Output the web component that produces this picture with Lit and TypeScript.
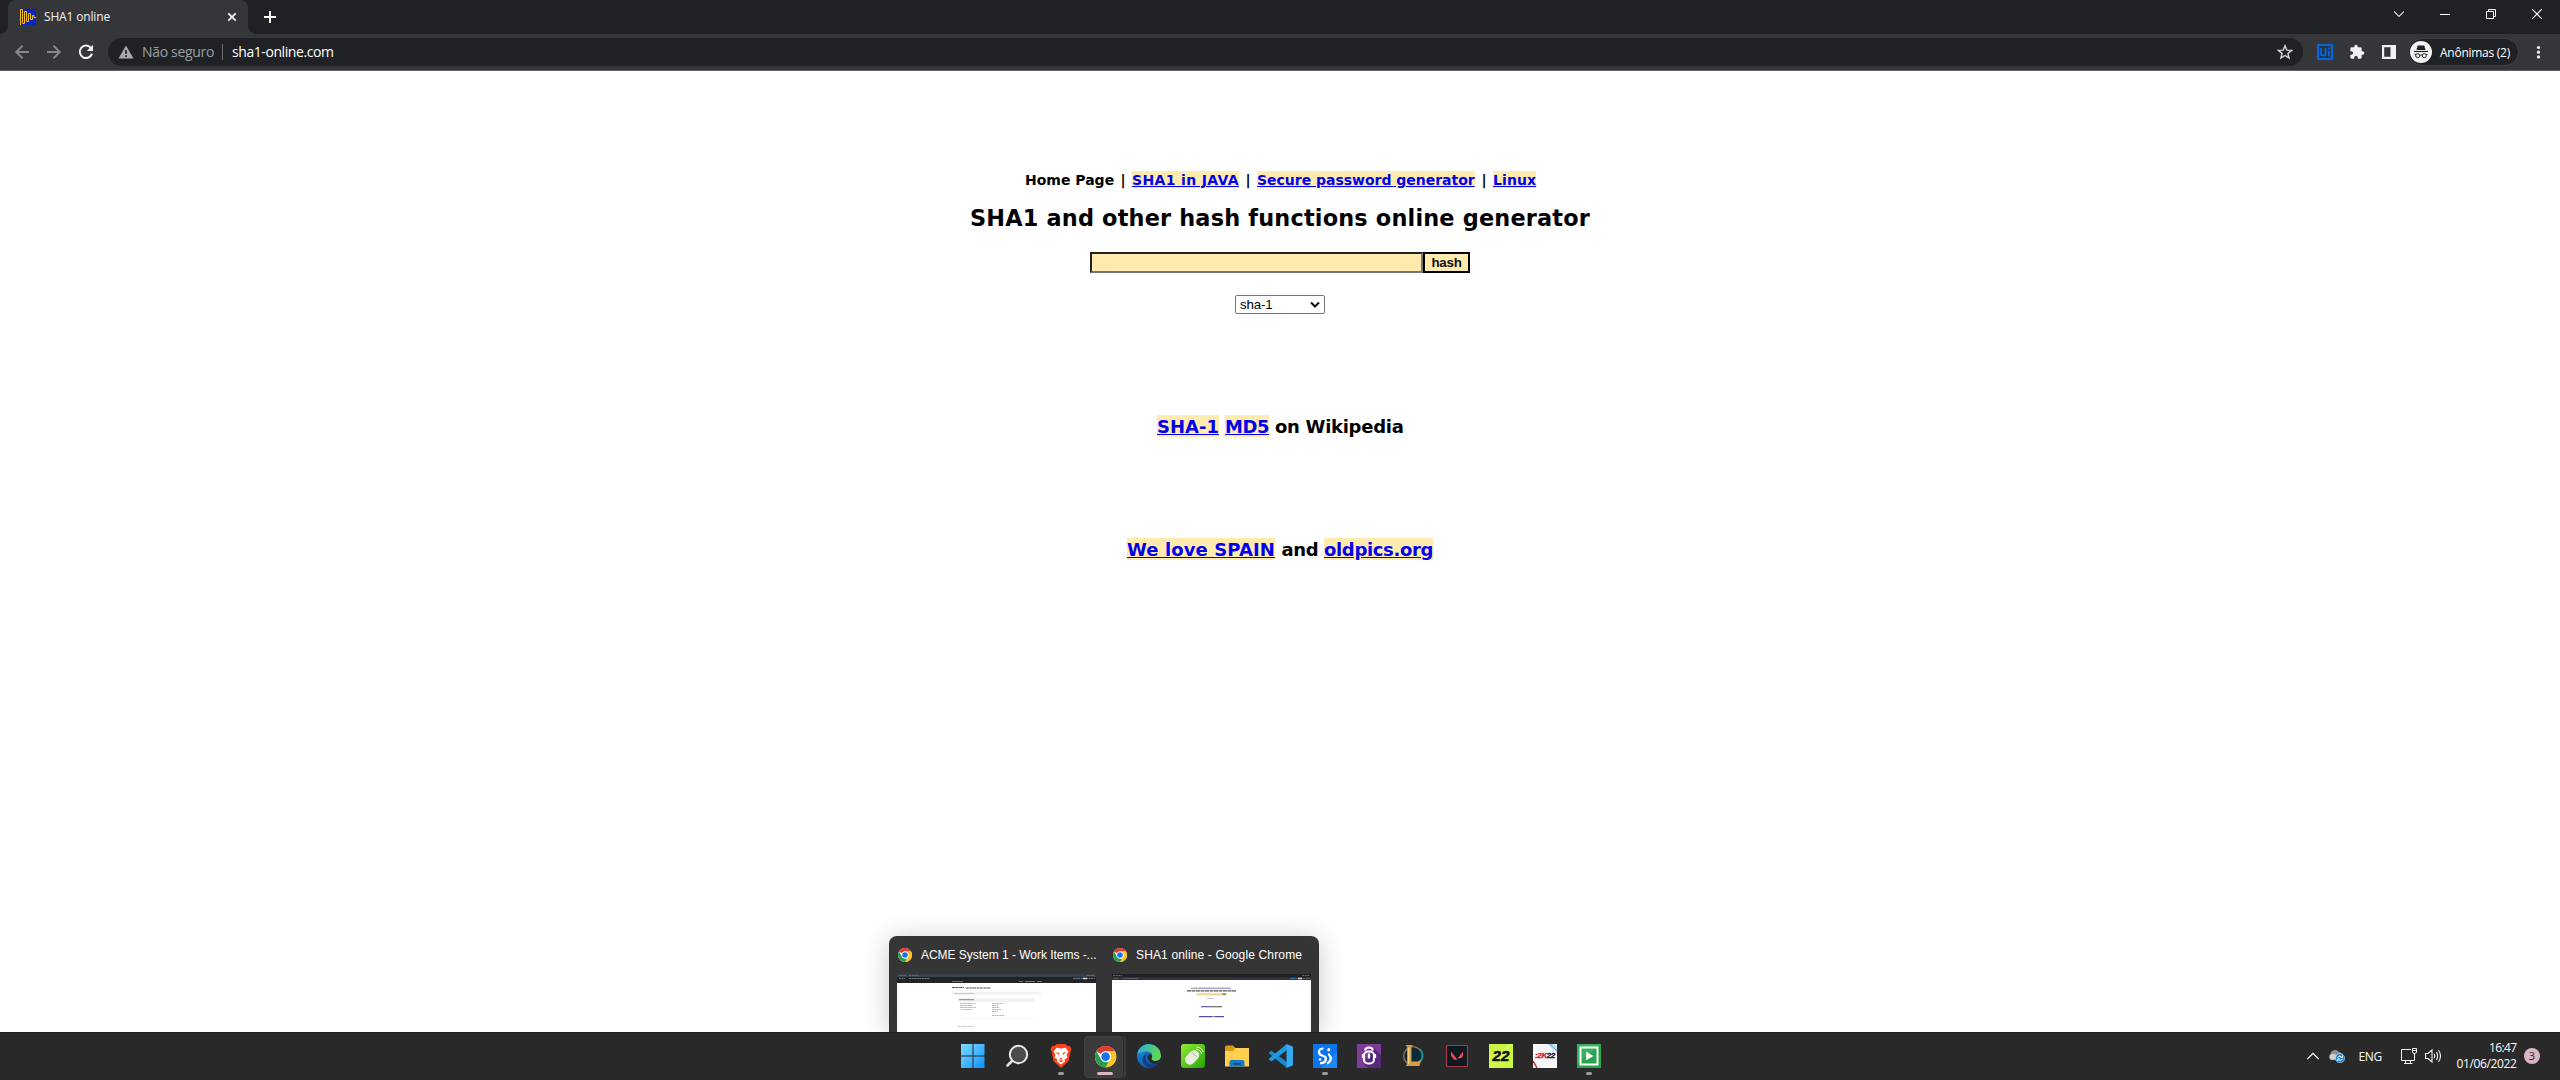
import { LitElement, html, css, svg } from "lit";
import { customElement } from "lit/decorators.js";

const chromeLogo = svg`
  <circle cx="24" cy="24" r="22" fill="#fff"/>
  <path d="M24 2A22 22 0 0 1 43.05 13H24A11 11 0 0 0 14.5 18.5L4.95 13A22 22 0 0 1 24 2Z" fill="#e33b2e"/>
  <path d="M43.05 13A22 22 0 0 1 24 46L33.5 29.5A11 11 0 0 0 33.5 18.5L31 13Z" fill="#fcc31e"/>
  <path d="M24 46A22 22 0 0 1 4.95 13L14.5 29.5A11 11 0 0 0 24 35L30 35.500Z" fill="#2a9d4a"/>
  <circle cx="24" cy="24" r="11" fill="#fff"/>
  <circle cx="24" cy="24" r="8.800" fill="#1a73e8"/>`;

const shared = css`
  * { box-sizing: border-box; }
  svg { display: block; flex: none; }
`;

@customElement("browser-chrome")
export class BrowserChrome extends LitElement {
  static styles = [shared, css`
    :host { display: block; font-family: "Open Sans", sans-serif; color: #fff; }
    .strip { height: 34px; background: #202124; display: flex; align-items: stretch; padding-left: 8px; }
    .tab { position: relative; width: 240px; background: #35363a; border-radius: 8px 8px 0 0; display: flex; align-items: center; padding: 0 10px 0 12px; }
    .tab::before, .tab::after { content: ""; position: absolute; bottom: 0; width: 8px; height: 8px; }
    .tab::before { left: -8px; background: radial-gradient(circle at 0 0, transparent 7.5px, #35363a 8px); }
    .tab::after { right: -8px; background: radial-gradient(circle at 100% 0, transparent 7.5px, #35363a 8px); }
    .title { font-size: 12px; letter-spacing: -0.157px; margin-left: 8px; flex: 1; line-height: 16px; color: #f1f3f4; white-space: nowrap; }
    .plus { align-self: center; margin-left: 16px; }
    .win { margin-left: auto; display: flex; }
    .win div { width: 46px; height: 28px; display: flex; align-items: center; justify-content: center; }
    .bar { height: 36px; background: #35363a; display: flex; align-items: center; padding: 0 14px; }
    .nav { display: flex; gap: 16px; }
    .omni { flex: 1; margin-left: 14px; height: 28px; border-radius: 14px; background: #202124; display: flex; align-items: center; padding: 0 10px; font-size: 14px; line-height: 20px; white-space: nowrap; }
    .warn { color: #9aa0a6; letter-spacing: -0.324px; margin-left: 8px; width: 72px; }
    .sep { width: 1px; height: 16px; background: #6b6e73; margin: 0 9px 0 8px; }
    .url { letter-spacing: -0.42px; flex: 1; }
    .ext { display: flex; gap: 16px; margin-left: 14px; }
    .profile { margin-left: 11px; width: 111px; height: 28px; border-radius: 14px; background: #202124; border: 1px solid #3f4145; display: flex; align-items: center; padding-left: 1px; font-size: 12px; letter-spacing: -0.259px; white-space: nowrap; }
    .profile span { margin-left: 8px; }
    .more { margin-left: 11px; }
    .line { height: 1px; background: #625d66; }
  `];
  render() {
    return html`
      <div class="strip">
        <div class="tab">
          <svg width="16" height="16" viewBox="0 0 16 16"><rect width="16" height="16" fill="#0a25c4"/><path d="M.5 16V.5H2.5V14.5H4.5V2.5H6.5V12.5H8.5V4.5H10.5V10.500H12.5V6.500H14V8.500H16" fill="none" stroke="#eebf2c" stroke-width="1"/></svg>
          <span class="title">SHA1 online</span>
          <svg width="12" height="12" viewBox="0 0 12 12"><path d="M2.300 2.300L9.700 9.700M9.700 2.300L2.300 9.700" stroke="#f1f3f4" stroke-width="1.900"/></svg>
        </div>
        <svg class="plus" width="12" height="12" viewBox="0 0 12 12"><path d="M6 0V12M0 6H12" stroke="#fff" stroke-width="2"/></svg>
        <div class="win">
          <div><svg width="10" height="10" viewBox="0 0 10 10"><path d="M0 2.500L5 7.500L10 2.500" fill="none" stroke="#dadce0" stroke-width="1.100"/></svg></div>
          <div><svg width="10" height="10" viewBox="0 0 10 10"><path d="M0 5.500H10" stroke="#fff"/></svg></div>
          <div><svg width="10" height="10" viewBox="0 0 10 10"><path d="M.5 2.500H7.500V9.500H.5ZM2.500 2.500V.5H9.500V7.500H7.500" fill="none" stroke="#fff"/></svg></div>
          <div><svg width="10" height="10" viewBox="0 0 10 10"><path d="M0 0L10 10M10 0L0 10" stroke="#fff" stroke-width="1.200"/></svg></div>
        </div>
      </div>
      <div class="bar">
        <div class="nav">
          <svg width="16" height="16" viewBox="0 0 16 16"><path d="M15 8H2.500M8.500 1.800L2.200 8L8.500 14.200" fill="none" stroke="#85878b" stroke-width="1.900"/></svg>
          <svg width="16" height="16" viewBox="0 0 16 16"><path d="M1 8H13.500M7.500 1.800L13.800 8L7.500 14.200" fill="none" stroke="#85878b" stroke-width="1.900"/></svg>
          <svg width="16" height="16" viewBox="0 0 16 16"><path d="M12.800 3.800A6.200 6.200 0 1 0 14 9.600" fill="none" stroke="#f1f3f4" stroke-width="2"/><path d="M15 0.800V7H8.800Z" fill="#f1f3f4"/></svg>
        </div>
        <div class="omni">
          <svg width="16" height="16" viewBox="0 0 16 16"><path d="M8 1.500L15.500 14.500H.5Z" fill="#a6aaaf"/><path d="M8 6V10M8 11.300V13" stroke="#202124" stroke-width="1.600"/></svg>
          <span class="warn">Não seguro</span><span class="sep"></span><span class="url">sha1-online.com</span>
          <svg width="16" height="16" viewBox="0 0 16 16"><path d="M8 1.700L9.800 6.100L14.600 6.400L10.900 9.400L12.100 14L8 11.500L3.900 14L5.100 9.400L1.400 6.400L6.200 6.100Z" fill="none" stroke="#d5d7da" stroke-width="1.400"/></svg>
        </div>
        <div class="ext">
          <svg width="16" height="16" viewBox="0 0 16 16"><rect x="1" y="1" width="14" height="14" fill="#2b333f" stroke="#0067df" stroke-width="2"/><path d="M4 4V9.200A2.300 2.300 0 0 0 8.600 9.200V4M11.900 6.500V12.500M11.900 3.500V5.200" fill="none" stroke="#0067df" stroke-width="1.800"/></svg>
          <svg width="16" height="16" viewBox="0 0 24 24"><path d="M20.500 11H19V7a2 2 0 0 0-2-2h-4V3.500a2.500 2.500 0 0 0-5 0V5H4a2 2 0 0 0-2 2v3.800h1.500a2.700 2.700 0 0 1 0 5.400H2V20a2 2 0 0 0 2 2h3.800v-1.500a2.700 2.700 0 0 1 5.400 0V22H17a2 2 0 0 0 2-2v-4h1.500a2.500 2.500 0 0 0 0-5Z" fill="#f1f3f4"/></svg>
          <svg width="16" height="16" viewBox="0 0 16 16"><path d="M1 1H15V15H1ZM3.200 3.200V12.800H9.500V3.200Z" fill="#f1f3f4" fill-rule="evenodd"/></svg>
        </div>
        <div class="profile">
          <svg width="22" height="22" viewBox="0 0 22 22"><circle cx="11" cy="11" r="11" fill="#f1f3f4"/><path d="M7.700 4.500H14.300L15.500 9H6.500Z" fill="#202124"/><path d="M4 10.500H18" stroke="#202124" stroke-width="1.200"/><circle cx="7.700" cy="14.700" r="2" fill="none" stroke="#202124"/><circle cx="14.300" cy="14.700" r="2" fill="none" stroke="#202124"/><path d="M9.700 14.300Q11 13.600 12.300 14.300M4.500 13.500H6M17.500 13.500H16" stroke="#202124" fill="none"/></svg>
          <span>Anônimas (2)</span>
        </div>
        <svg class="more" width="16" height="16" viewBox="0 0 16 16"><circle cx="8.500" cy="3.500" r="1.600" fill="#f1f3f4"/><circle cx="8.500" cy="8.200" r="1.600" fill="#f1f3f4"/><circle cx="8.500" cy="12.900" r="1.600" fill="#f1f3f4"/></svg>
      </div>
      <div class="line"></div>`;
  }
}

@customElement("hash-page")
export class HashPage extends LitElement {
  static styles = [shared, css`
    :host { display: flex; flex-direction: column; align-items: center; background: #fff; font-family: "DejaVu Sans", sans-serif; font-weight: bold; color: #000; padding-top: 100px; }
    .row { display: flex; justify-content: center; white-space: pre; }
    .row > * { flex: none; }
    a { color: #00e; background: #ffebad; text-decoration: underline; display: block; }
    .links { font-size: 14px; line-height: 19px; height: 17px; padding-left: 1px; }
    .links a { height: 17px; }
    .bar { width: 18px; text-align: center; }
    .home { width: 89px; }
    .java { width: 107px; letter-spacing: 0.358px; }
    .pass { width: 218px; letter-spacing: -0.018px; }
    .linux { width: 43px; letter-spacing: 0.1px; }
    h1 { margin: 17px 0 0; font-size: 22.4px; letter-spacing: 0.184px; line-height: 26px; height: 26px; white-space: nowrap; }
    .form { display: flex; margin-top: 21px; height: 21px; }
    .field { width: 333px; height: 21px; border: 2px solid #767676; border-color: #222 #767676 #767676 #222; background: #ffebad; padding: 0; outline: none; border-radius: 0; }
    .go { width: 47px; height: 21px; border: 2px solid #000; background: #ffebad; font: bold 13.333px "Liberation Sans", sans-serif; letter-spacing: -0.25px; padding: 0; line-height: 17px; color: #111; }
    .select { margin-top: 22px; width: 90px; height: 19px; border: 1px solid #767676; border-radius: 2px; font: 13.333px/16px "Liberation Sans", sans-serif; letter-spacing: -0.168px; display: flex; align-items: center; justify-content: space-between; padding: 0 4px; }
    .big { font-size: 18px; line-height: 23px; height: 22px; }
    .big a { height: 22px; }
    .wiki { margin-top: 101px; gap: 6px; }
    .sha { width: 62px; }
    .md { width: 44px; letter-spacing: -0.459px; }
    .on { width: 128px; letter-spacing: -0.284px; }
    .love { margin-top: 101px; gap: 6.5px; }
    .spain { width: 148px; letter-spacing: 0.106px; }
    .and { width: 36px; letter-spacing: -0.4px; }
    .old { width: 109px; letter-spacing: -0.348px; }
  `];
  render() {
    return html`
      <div class="row links"><span class="home">Home Page</span><span class="bar">|</span><a class="java">SHA1 in JAVA</a><span class="bar">|</span><a class="pass">Secure password generator</a><span class="bar">|</span><a class="linux">Linux</a></div>
      <h1>SHA1 and other hash functions online generator</h1>
      <div class="form"><input class="field"><button class="go">hash</button></div>
      <div class="select"><span>sha-1</span><svg width="10" height="8" viewBox="0 0 10 8"><path d="M1 1.500L5 5.500L9 1.500" fill="none" stroke="#111" stroke-width="2"/></svg></div>
      <div class="row big wiki"><a class="sha">SHA-1</a><a class="md">MD5</a><span class="on">on Wikipedia</span></div>
      <div class="row big love"><a class="spain">We love SPAIN</a><span class="and">and</span><a class="old">oldpics.org</a></div>`;
  }
}

@customElement("window-previews")
export class WindowPreviews extends LitElement {
  static styles = [shared, css`
    :host { display: flex; gap: 16px; width: 430px; height: 96px; background: #353535; border-radius: 8px 8px 0 0; padding: 0 8px; box-shadow: 0 3px 26px rgba(0,0,0,.22); font: 12px/16px "Liberation Sans", sans-serif; color: #fff; }
    .card { width: 199px; flex: none; }
    .head { height: 38px; display: flex; align-items: center; gap: 9px; padding-left: 1px; white-space: nowrap; letter-spacing: -0.03px; }
    .second { letter-spacing: 0.15px; }
  `];
  render() {
    const logo = html`<svg width="14" height="14" viewBox="2 2 44 44">${chromeLogo}</svg>`;
    return html`
      <div class="card">
        <div class="head">${logo}<span>ACME System 1 - Work Items -...</span></div>
        <svg width="199" height="58" viewBox="0 0 199 58">
          <rect width="199" height="58" fill="#fff"/><rect width="199" height="3" fill="#39414a"/><rect y="3" width="199" height="3" fill="#202124"/><rect y="6" width="199" height="3" fill="#222"/>
          <path d="M2 1.500H9M12 1.500H22M190 1.500H198" stroke="#7b8792" stroke-width=".6" stroke-dasharray="2 .6"/>
          <path d="M2 4.500H8M12 4.500H33M176 4.500H198" stroke="#8c969e" stroke-width=".8" stroke-dasharray="2 .6"/><path d="M180 4.500H183" stroke="#1b73d0" stroke-width="1.500"/><path d="M186 4.500H190" stroke="#ddd" stroke-width="1.500"/>
          <path d="M55 7.500H66M122 7.500H126M128 7.500H138M140 7.500H145" stroke="#999" stroke-width=".7"/>
          <path d="M55 13.500H67M69 14H94" stroke="#555" stroke-width="1.100" stroke-dasharray="3 .5"/><path d="M55 16.500H143" stroke="#eee" stroke-width=".5"/>
          <rect x="55" y="18" width="89" height="3" fill="#f4f4f4"/><path d="M57 19.500H77" stroke="#aeb6be" stroke-width=".7"/>
          <rect x="61" y="24" width="77" height="4" fill="#f2f2f2"/><path d="M62 25.700H77" stroke="#777" stroke-width=".9"/>
          <path d="M63 29.500H79M63 31.500H76M63 33.500H79M64 35.500H75M95 29.500H106M95 31.500H101M95 33.500H102M95 35.500H104M95 37.500H101M95 41.500H107" stroke="#999" stroke-width=".7" stroke-dasharray="2 .5"/>
          <path d="M61 44.500H138" stroke="#eee" stroke-width=".5"/><path d="M61 52.500H77" stroke="#aaa" stroke-width=".7" stroke-dasharray="2 .5"/>
        </svg>
      </div>
      <div class="card">
        <div class="head second">${logo}<span>SHA1 online - Google Chrome</span></div>
        <svg width="199" height="58" viewBox="0 0 199 58">
          <rect width="199" height="58" fill="#fff"/><rect width="199" height="3" fill="#202124"/><rect y="3" width="199" height="3" fill="#303136"/>
          <path d="M1 1.500H10M190 1.500H198M2 4.500H7M11 4.500H26M178 4.500H198" stroke="#7b8087" stroke-width=".7" stroke-dasharray="2 .6"/><path d="M180 4.500H183" stroke="#1b73d0" stroke-width="1.500"/><path d="M186 4.500H190" stroke="#ddd" stroke-width="1.500"/>
          <path d="M79 14.200H87" stroke="#777" stroke-width=".9"/><path d="M87 14.200H119" stroke="#8274bb" stroke-width="1"/>
          <path d="M75 16.800H124" stroke="#555" stroke-width="1.200" stroke-dasharray="4 .5"/>
          <rect x="84.500" y="19" width="30" height="2.500" fill="#f3dc9a"/><path d="M110.500 20.200H114" stroke="#8b7b50" stroke-width="1.500"/>
          <path d="M95 24.500H102" stroke="#aaa" stroke-width=".7"/><path d="M89 32.700H98" stroke="#6458b0" stroke-width="1.200"/><path d="M98 32.700H110" stroke="#666" stroke-width="1.200"/>
          <path d="M87 42.700H100M103 42.700H112" stroke="#5d4aa9" stroke-width="1.300"/><path d="M100 42.700H103" stroke="#777" stroke-width="1"/>
        </svg>
      </div>`;
  }
}

const apps = [
  { name: "start", art: svg`<defs><linearGradient id="w" x2="1" y2="1"><stop stop-color="#7bdcff"/><stop offset="1" stop-color="#0f93ff"/></linearGradient></defs><path d="M0 0H11.500V11.500H0ZM12.500 0H23.500V11.500H12.500ZM0 12.500H11.500V24H0ZM12.500 12.500H23.500V24H12.500Z" fill="url(#w)"/>` },
  { name: "search", art: svg`<circle cx="13.500" cy="10.500" r="8.700" fill="#4b4b4b" stroke="#e8e8e8" stroke-width="2"/><path d="M7 17L2.500 21.500" stroke="#e0e0e0" stroke-width="2.600" stroke-linecap="round"/>` },
  { name: "brave", dot: true, art: svg`<path d="M7.500 0H16.500L18.500 2L20.500 1.800L22.500 4.800L21.500 7.500L19.500 17L12 24L4.500 17L2.500 7.500L1.500 4.800L3.500 1.800L5.500 2Z" fill="#fb4218"/><path d="M12 4.500L16.500 3.800L19.300 7.300L17.500 11L18.500 13.500L15.500 15.500L16 17.500L12 20.500L8 17.500L8.500 15.500L5.500 13.500L6.500 11L4.700 7.300L7.500 3.800Z" fill="#fff"/><path d="M7 8L10.500 9L9.500 11ZM17 8L13.500 9L14.500 11ZM10.500 14H13.500L12 16ZM9 17L12 16L15 17L12 18Z" fill="#fb4218"/>` },
  { name: "chrome", active: true, art: svg`<g transform="translate(1 1) scale(.485)">${chromeLogo}</g>` },
  { name: "edge", art: svg`<defs><linearGradient id="eg" y2=".3"><stop stop-color="#2aa8e6"/><stop offset="1" stop-color="#62d84e"/></linearGradient><linearGradient id="eb" x2=".6" y2="1"><stop stop-color="#1593dc"/><stop offset="1" stop-color="#0c55a8"/></linearGradient></defs><circle cx="12" cy="12" r="12" fill="url(#eb)"/><path d="M.3 9.500A12 12 0 0 1 24 11.500C24 15 21.500 17 18.500 17C15 17 14 15.700 14.500 14.500C17 10 13 7.500 9.500 7.500C5 7.500 1.500 10 .3 9.500Z" fill="url(#eg)"/><path d="M10.500 9.500C7 12 8 20 16 20.500C19 20.600 21 19.500 22.500 18C20.500 22 15 25 10 22.500C3.500 19 4.500 10.500 10.500 9.500Z" fill="#123f82"/><path d="M12.500 10C15 10 15.700 12 14.700 14C14 15.500 15 17 18.500 17C21 17 22.500 16 24 14.500V18C22 19.600 21 19.800 19 19.800C14 20.500 9.500 16 10.500 12Z" fill="#292929"/>` },
  { name: "mouse", art: svg`<defs><linearGradient id="mg" y2="1"><stop stop-color="#90ed31"/><stop offset="1" stop-color="#26a20c"/></linearGradient></defs><rect width="24" height="24" rx="3" fill="url(#mg)"/><rect x="6" y="5.500" width="10" height="16" rx="5" transform="rotate(43 11 13.500)" fill="#e9ecdc"/><path d="M10.500 8L16 13" stroke="#b6c39c"/><path d="M15 8A3 3 0 0 1 18 10.500M15 5.500A5.500 5.500 0 0 1 20.500 10M15.500 3A7 7 0 0 1 22 8" fill="none" stroke="#e8ffd8"/>` },
  { name: "folder", art: svg`<path d="M0 3Q0 1.500 1.500 1.500H8L10.500 4H24V22H0Z" fill="#d99a12"/><path d="M0 7H8L10.500 4H24V22.500H0Z" fill="#ffcf50"/><path d="M4.500 22.500V18Q4.500 16 6.500 16H17.500Q19.500 16 19.500 18V22.500Z" fill="#167ac4"/><path d="M8 20H16" stroke="#0a4e88" stroke-width="1.500"/>` },
  { name: "code", art: svg`<path d="M17.500 6.500V0L2 14.500L0 15.700V14.800L2.500 17Z" fill="#1180c8"/><path d="M0 8.300L2.500 6.800L18 18V24L0 9.500Z" fill="#1689d2"/><path d="M0 15.500L2.500 17.200L18 6V0L0 14.500Z" fill="#1f9ae0"/><path d="M17.500 0L24 2.800V21.200L17.500 24Z" fill="#34abf0"/>` },
  { name: "studio", dot: true, art: svg`<rect width="24" height="24" fill="#0b73ec"/><path d="M24 8V24H8Z" fill="#2790fa" opacity=".7"/><path d="M10.500 4.500C5 4.500 4.500 10 9 11.500L11 12.300C14.500 14 13 19.500 7 19.200" fill="none" stroke="#fff" stroke-width="2.200"/><path d="M16 9.500V11Q18.500 13 17.500 16Q16.500 18.500 14 19.500" fill="none" stroke="#fff" stroke-width="2.200"/><circle cx="15.800" cy="5.700" r="1.600" fill="#fff"/><circle cx="7" cy="15.500" r="1.300" fill="#fff"/>` },
  { name: "robot", art: svg`<rect width="24" height="24" fill="#7d3c98"/><path d="M17 4L24 11V24H11L7 20Z" fill="#56297c"/><rect x="7" y="7.500" width="10" height="12" rx="4" fill="none" stroke="#fff" stroke-width="2"/><path d="M8 6.500Q8.500 3.500 12 3.500T16 6.500" fill="none" stroke="#fff" stroke-width="1.800"/><path d="M12 9.500V14.500M6 10V14M18 10V14" stroke="#fff" stroke-width="2.200"/>` },
  { name: "league", art: svg`<circle cx="12" cy="12" r="9.300" fill="#0a2a37" stroke="#987740" stroke-width="1.300"/><path d="M19 5A9.300 9.300 0 0 1 20 17" fill="none" stroke="#1492a0" stroke-width="1.500"/><path d="M4.500 1H12L10.500 3V17.500H17L20 15.500L18.500 22H4.500L6.500 19.500V3.500Z" fill="#d2a04c"/><path d="M6.500 3.500L8.500 4V20L6.500 19.500Z" fill="#f2cf7c"/>` },
  { name: "valorant", art: svg`<rect x="1.500" y="1.500" width="21" height="21" rx="1" fill="#101822" stroke="#a63947" stroke-width="1.200"/><path d="M6 7.500L12.500 15.700H9.200L6 11.700ZM18 7.500V11.700L16 14.200H12.700Z" fill="#f4455a"/>` },
  { name: "fifa", badge: "22", art: svg`<rect width="24" height="24" fill="#cdf545"/><path d="M0 20L20 0H24L4 24H0Z" fill="#d8fb58" opacity=".6"/>` },
  { name: "nba", art: svg`<rect width="24" height="24" fill="#f7f8fa"/><path d="M14 0L24 9V3L21 0Z" fill="#c6dcee"/><path d="M17 0L24 7" stroke="#519bd6" stroke-width=".8"/><path d="M0 17L4 24" stroke="#d63b42" stroke-width="1.600"/>`, game: true },
  { name: "recorder", dot: true, art: svg`<rect width="24" height="24" fill="#25a54d"/><path d="M0 0H24L0 20Z" fill="#42bc67" opacity=".6"/><rect x="3.500" y="3.500" width="17" height="17" fill="none" stroke="#fff" stroke-width="2"/><path d="M9 7.800V16.200L16.500 12Z" fill="#fff"/>` },
];

@customElement("task-bar")
export class TaskBar extends LitElement {
  static styles = [shared, css`
    :host { display: grid; grid-template-columns: 1fr 660px 1fr; height: 48px; background: #292929; color: #fff; font-family: "Open Sans", sans-serif; box-shadow: inset 0 1px #232323; }
    .apps { grid-column: 2; display: flex; padding-left: 1px; }
    .app { position: relative; flex: none; width: 44px; height: 48px; display: flex; align-items: center; justify-content: center; }
    .on::before { content: ""; position: absolute; left: 1px; top: 4px; width: 37px; height: 40px; border-radius: 4px; background: #3b3b3b; box-shadow: 1px 0 #292929, 3px 0 #3b3b3b; border: 1px solid #414141; }
    .app svg { position: relative; }
    .app::after { content: ""; position: absolute; bottom: 5px; left: 19px; height: 3px; border-radius: 2px; width: 6px; background: transparent; }
    .dot::after { background: #9b9b9b; }
    .on::after { left: 14px; width: 16px; background: #d9b5c6; }
    .badge { position: absolute; font: italic bold 15px/16px "Liberation Sans", sans-serif; color: #111; -webkit-text-stroke: .6px #111; letter-spacing: .2px; }
    .game { position: absolute; font: italic bold 8px/10px "Liberation Sans", sans-serif; color: #d82230; letter-spacing: -.4px; white-space: nowrap; -webkit-text-stroke: .4px; }
    .game b { color: #191919; }
    .tray { display: flex; align-items: center; justify-content: flex-end; padding-right: 20px; font-size: 12px; white-space: nowrap; }
    .cloud { margin-left: 9px; }
    .lang { margin-left: 14px; width: 23px; letter-spacing: -0.309px; }
    .net { margin-left: 19px; }
    .vol { margin-left: 8px; }
    .clock { margin-left: 15px; width: 60px; text-align: right; line-height: 16px; letter-spacing: -0.369px; }
    .time { letter-spacing: -0.62px; }
    .count { margin-left: 7.5px; width: 16px; height: 16px; border-radius: 50%; background: #d9b5c6; color: #222; font-size: 11px; line-height: 16px; text-align: center; }
  `];
  render() {
    return html`
      <div class="apps">
        ${apps.map((a: any) => html`<div class="app ${a.active ? "on" : ""} ${a.dot ? "dot" : ""}">
          <svg width="24" height="24" viewBox="0 0 24 24">${a.art}</svg>
          ${a.badge ? html`<span class="badge">${a.badge}</span>` : ""}
          ${a.game ? html`<span class="game">:2K<b>22</b></span>` : ""}
        </div>`)}
      </div>
      <div class="tray">
        <svg width="12" height="12" viewBox="0 0 12 12"><path d="M.3 9L6 3.300L11.700 9" fill="none" stroke="#fff" stroke-width="1.200"/></svg>
        <svg class="cloud" width="17" height="14" viewBox="0 0 17 14"><path d="M4 10A3 3 0 0 1 2.500 4.700A4.700 4.700 0 0 1 11 3A4 4 0 0 1 13.500 10Z" fill="#919191"/><path d="M3.500 11A3 3 0 0 1 3 5.500Q5.500 4 8 6L13 10Z" fill="#cfcfcf"/><circle cx="12" cy="9.200" r="4.600" fill="#1683d8" stroke="#fff" stroke-width=".5"/><path d="M9.500 8.500Q11 6.500 13.500 7.500M14.500 6.500V8.500H12.500M14.500 10Q13 12 10.500 11M9.500 12V10H11.500" fill="none" stroke="#fff"/></svg>
        <span class="lang">ENG</span>
        <svg class="net" width="16" height="16" viewBox="0 0 16 16"><path d="M10 1.500H.5V12.500H13.500V8M4.500 12.500V15M9.500 12.500V15M3 15.500H11.500M13.500 5V8M11.500 .5H15.500V4Q15.500 5.500 13.500 5.500T11.500 4ZM11.500 2.500H15.500" fill="none" stroke="#f4f4f4" stroke-width="1"/></svg>
        <svg class="vol" width="17" height="16" viewBox="0 0 17 16"><path d="M.5 5.500H3L7 2V14L3 10.500H.5ZM9 5.800Q10.500 8 9 10.200M11.300 4Q14 8 11.300 12M13.500 2.300Q17.500 8 13.500 13.700" fill="none" stroke="#f4f4f4" stroke-width="1.100"/></svg>
        <div class="clock"><div class="time">16:47</div><div>01/06/2022</div></div>
        <div class="count">3</div>
      </div>`;
  }
}

@customElement("app-root")
export class AppRoot extends LitElement {
  static styles = css`
    :host { display: flex; flex-direction: column; height: 1080px; width: 2560px; background: #fff; position: relative; overflow: hidden; }
    hash-page { flex: 1; min-height: 0; }
    window-previews { position: absolute; left: 889px; bottom: 48px; box-sizing: border-box; }
    task-bar { position: relative; box-sizing: border-box; }
  `;
  render() {
    return html`
      <browser-chrome></browser-chrome>
      <hash-page></hash-page>
      <window-previews></window-previews>
      <task-bar></task-bar>`;
  }
}
